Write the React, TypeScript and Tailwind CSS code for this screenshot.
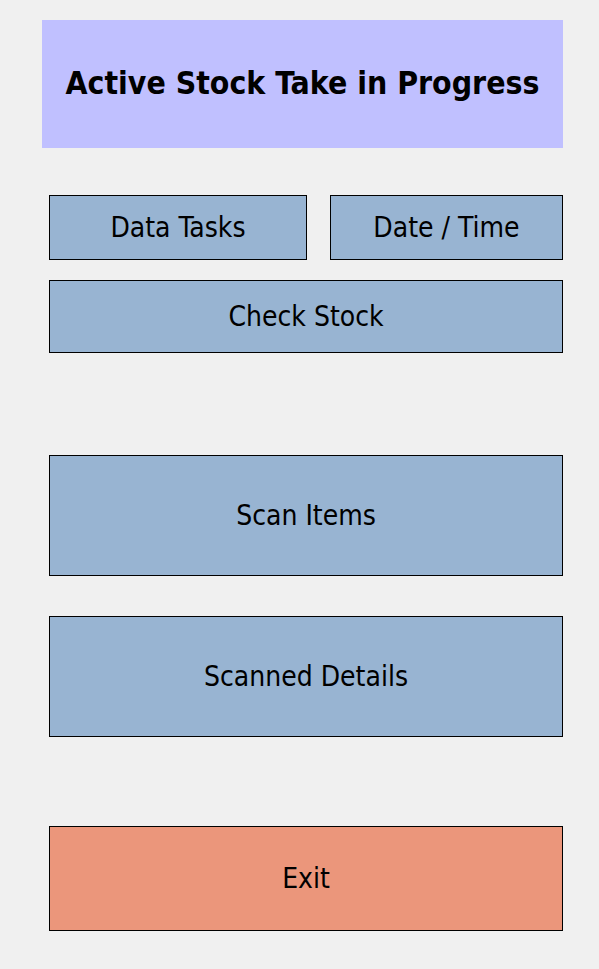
export default function App() {
  const btn =
    "flex items-center justify-center border border-black bg-[#98b4d2] text-[28px] text-black";

  return (
    <main
      className="min-h-[969px] w-[599px] bg-[#f0f0f0] pt-5"
      style={{ fontFamily: '"DejaVu Sans Condensed", "DejaVu Sans", sans-serif' }}
    >
      {/* header */}
      <div className="ml-[42px] flex h-[128px] w-[521px] items-center justify-center bg-[#c0c0ff]">
        <h1 className="text-[31.7px] font-bold text-black">Active Stock Take in Progress</h1>
      </div>

      <div className="ml-[49px] w-[514px]">
        <div className="mt-[47px] flex gap-[23px]">
          <button className={`${btn} h-[65px] w-[258px]`}>Data Tasks</button>
          <button className={`${btn} h-[65px] w-[233px]`}>Date / Time</button>
        </div>
        <button className={`${btn} mt-[20px] h-[73px] w-full`}>Check Stock</button>

        <button className={`${btn} mt-[102px] h-[121px] w-full`}>Scan Items</button>
        <button className={`${btn} mt-[40px] h-[121px] w-full`}>Scanned Details</button>

        <button className={`${btn} mt-[89px] h-[105px] w-full bg-[#eb967b]`}>Exit</button>
      </div>
    </main>
  );
}
